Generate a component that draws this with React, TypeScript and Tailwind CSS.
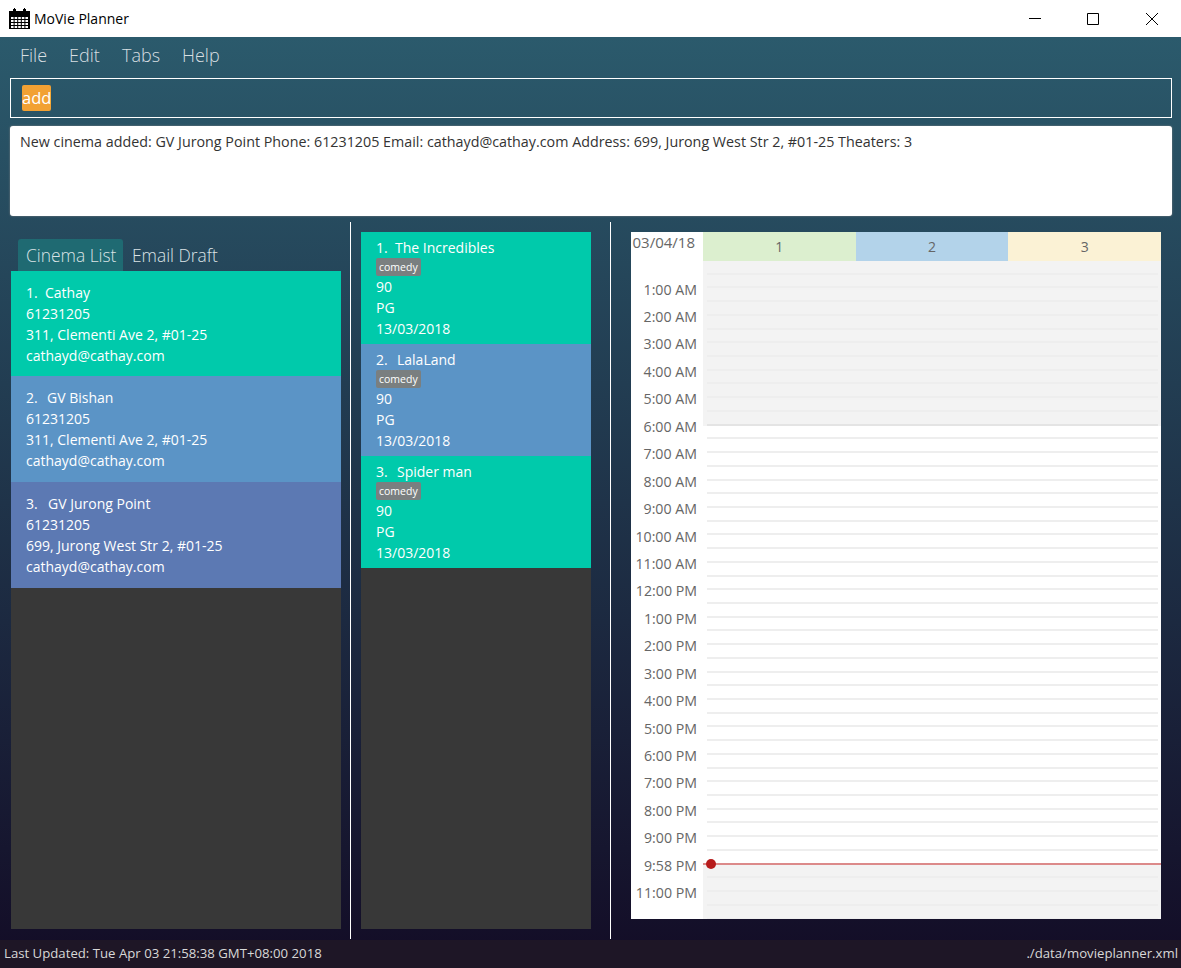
const font = "[font-family:'Open_Sans','Noto_Sans',sans-serif]";

const cinemas = [
  { i: "1.", w: "w-[19px]", n: "Cathay", addr: "311, Clementi Ave 2, #01-25", bg: "bg-[#00caab]", h: "h-[105px]" },
  { i: "2.", w: "w-[21px]", n: "GV Bishan", addr: "311, Clementi Ave 2, #01-25", bg: "bg-[#5b94c6]", h: "h-[106px]" },
  { i: "3.", w: "w-[22px]", n: "GV Jurong Point", addr: "699, Jurong West Str 2, #01-25", bg: "bg-[#5c79b3]", h: "h-[106px]" },
];
const movies = [
  { i: "1.", w: "w-[19px]", n: "The Incredibles", bg: "bg-[#00caab]" },
  { i: "2.", w: "w-[21px]", n: "LalaLand", bg: "bg-[#5b94c6]" },
  { i: "3.", w: "w-[21px]", n: "Spider man", bg: "bg-[#00caab]" },
];
const times = [
  "1:00 AM", "2:00 AM", "3:00 AM", "4:00 AM", "5:00 AM", "6:00 AM", "7:00 AM", "8:00 AM", "9:00 AM", "10:00 AM", "11:00 AM",
  "12:00 PM", "1:00 PM", "2:00 PM", "3:00 PM", "4:00 PM", "5:00 PM", "6:00 PM", "7:00 PM", "8:00 PM", "9:00 PM", "9:58 PM", "11:00 PM",
];
const rows = Array.from({ length: 48 }, (_, i) => i);

function CalendarIcon() {
  return (
    <svg width="21" height="21" viewBox="0 0 21 21" className="mr-[4px]">
      <path d="M0 3h21v18H0z" fill="#000" />
      <rect x="4" y="1" width="3" height="4" fill="#000" />
      <rect x="14" y="1" width="3" height="4" fill="#000" />
      <rect x="5" y="0" width="1" height="2" fill="#000" />
      <rect x="15" y="0" width="1" height="2" fill="#000" />
      <g fill="#fff">
        {[2, 5.6, 9.2, 12.8, 16.4].map((x) =>
          [9, 12, 15, 18].map((y) => <rect key={`${x}-${y}`} x={x} y={y} width="2.6" height="2" />)
        )}
      </g>
    </svg>
  );
}

export default function App() {
  return (
    <div className={`${font} flex h-[968px] w-[1181px] flex-col overflow-hidden bg-white`}>
      <div className="flex h-[37px] shrink-0 items-center bg-white pl-[9px] text-[14px] text-black">
        <CalendarIcon />
        <span>MoVie Planner</span>
        <div className="ml-auto flex items-center pr-[23px]">
          <svg width="12" height="12" viewBox="0 0 12 12" className="mr-[46px]"><path d="M0 5.5h12" stroke="#000" /></svg>
          <svg width="12" height="12" viewBox="0 0 12 12" className="mr-[47px]"><path d="M.5.5h11v11H.5z" stroke="#000" fill="none" /></svg>
          <svg width="12" height="12" viewBox="0 0 12 12"><path d="M0 0l12 12M12 0L0 12" stroke="#000" /></svg>
        </div>
      </div>

      <div className="flex min-h-0 flex-1 flex-col bg-[linear-gradient(to_bottom,#2b5a6c,#130c26)]">
        <div className="mb-[5px] flex h-[36px] shrink-0 items-center pl-[20px] text-[18px] font-light text-[#d8dfe2]">
          <span className="w-[49px]">File</span>
          <span className="w-[53px]">Edit</span>
          <span className="w-[60px]">Tabs</span>
          <span>Help</span>
        </div>

        <div className="ml-[10px] mr-[9px] flex h-[40px] shrink-0 items-center border border-white pl-[11px]">
          <span className="flex h-[26px] items-center rounded-[2px] bg-[#f2a133] text-[16.5px] text-white">add</span>
        </div>

        <div className="ml-[10px] mr-[9px] mt-[8px] h-[90px] shrink-0 rounded-[3px] bg-white px-[10px] pt-[6px] text-[14.3px] leading-[20px] text-[#333] shadow-[0_0_2px_#888]">
          New cinema added: GV Jurong Point Phone: 61231205 Email: cathayd@cathay.com Address: 699, Jurong West Str 2, #01-25 Theaters: 3
        </div>

        <div className="flex min-h-0 flex-1 pb-[1px] pt-[6px]">
          <div className="flex w-[351px] shrink-0 flex-col border-r border-white pl-[11px] pr-[9px]">
            <div className="flex h-[49px] shrink-0 items-end pl-[7px] text-[17.4px] font-light text-[#dbe3e6]">
              <span className="flex h-[32px] w-[105px] items-center rounded-t-[3px] bg-[#1f6a72] pl-[8px]">Cinema List</span>
              <span className="flex h-[32px] items-center pl-[9px]">Email Draft</span>
            </div>
            <div className="mb-[10px] flex flex-1 flex-col bg-[#383838]">
              {cinemas.map((c) => (
                <div key={c.n} className={`${c.h} ${c.bg} shrink-0 px-[15px] pt-[11px] text-[14px] leading-[21px] text-white`}>
                  <div><span className={`inline-block ${c.w}`}>{c.i}</span>{c.n}</div>
                  <div>61231205</div>
                  <div>{c.addr}</div>
                  <div>cathayd@cathay.com</div>
                </div>
              ))}
            </div>
          </div>

          <div className="flex w-[260px] shrink-0 flex-col border-r border-white pl-[10px] pr-[19px] pt-[10px]">
            <div className="mb-[10px] flex flex-1 flex-col bg-[#383838]">
              {movies.map((m) => (
                <div key={m.n} className={`${m.bg} h-[112px] shrink-0 px-[15px] pt-[5px] text-[14px] leading-[21px] text-white`}>
                  <div><span className={`inline-block ${m.w}`}>{m.i}</span>{m.n}</div>
                  <div className="flex h-[18px] items-center">
                    <span className="flex h-[18px] items-center rounded-[2px] bg-[#7a7f80] px-[3px] text-[10.5px] leading-none">comedy</span>
                  </div>
                  <div>90</div>
                  <div>PG</div>
                  <div>13/03/2018</div>
                </div>
              ))}
            </div>
          </div>

          <div className="flex-1 pb-[19px] pl-[20px] pr-[20px] pt-[10px]">
            <div className="flex h-[687px] bg-white">
              <div className="w-[72px] shrink-0 pr-[6px] text-right text-[14.2px] text-[#666]">
                <div className="h-[44px] pr-[2px] text-[15px] leading-[21px]">03/04/18</div>
                {times.map((t) => (
                  <div key={t} className="flex h-[27.45px] items-center justify-end leading-none">{t}</div>
                ))}
              </div>
              <div className="flex min-w-0 flex-1 flex-col">
                <div className="flex h-[29px] shrink-0 text-center text-[14px] leading-[29px] text-[#666]">
                  <div className="flex-1 bg-[#dcefcf]">1</div>
                  <div className="flex-1 bg-[#b3d3ea]">2</div>
                  <div className="flex-1 bg-[#fbf2d5]">3</div>
                </div>
                <div className="relative flex-1 overflow-hidden">
                  {rows.map((i) => {
                    const shaded = i < 12 || i >= 44;
                    return (
                      <div key={i} className={`flex h-[13.73px] items-end pl-[4px] pr-[3px] ${shaded ? "bg-[#f3f3f3]" : "bg-white"}`}>
                        <div className={`h-[2px] w-full ${i === 11 ? "bg-[#e4e4e4]" : "bg-[#eeeeee]"}`} />
                      </div>
                    );
                  })}
                  <div className="absolute left-0 right-0 top-[602px] h-[2px] bg-[#dc8a8a]" />
                  <div className="absolute left-[3px] top-[598px] h-[10px] w-[10px] rounded-full bg-[#b71c1c]" />
                </div>
              </div>
            </div>
          </div>
        </div>

        <div className="flex h-[28px] shrink-0 items-center justify-between bg-[#1e1626] pl-[4px] pr-[3px] text-[13.2px] text-[#d8d8d8]">
          <span>Last Updated: Tue Apr 03 21:58:38 GMT+08:00 2018</span>
          <span>./data/movieplanner.xml</span>
        </div>
      </div>
    </div>
  );
}
